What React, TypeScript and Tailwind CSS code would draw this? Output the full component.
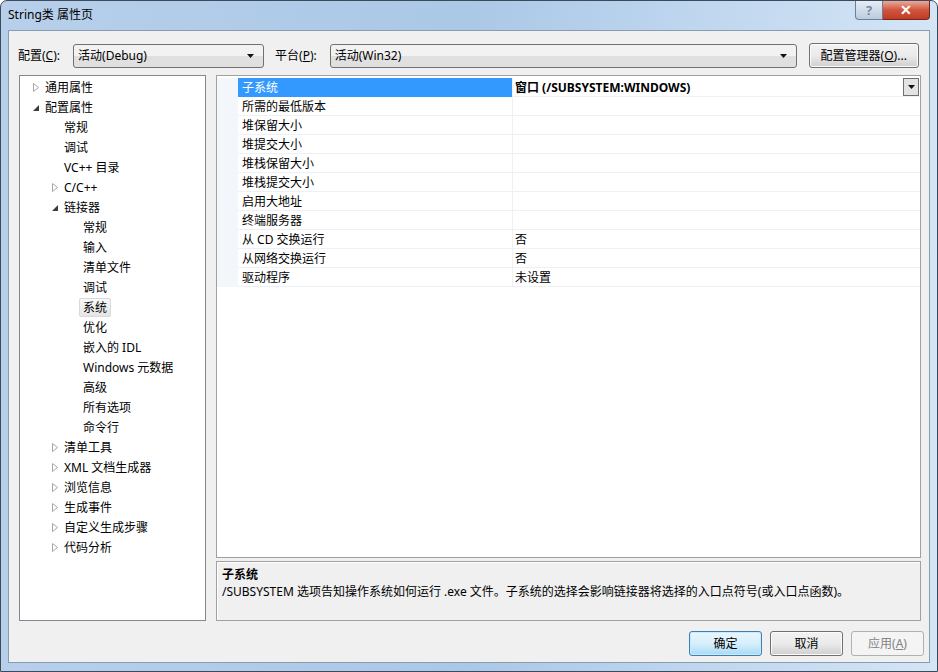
import React from "react";

type TreeItem = { label: string; level: number; exp?: "open" | "closed"; selected?: boolean };

const tree: TreeItem[] = [
  { label: "通用属性", level: 0, exp: "closed" },
  { label: "配置属性", level: 0, exp: "open" },
  { label: "常规", level: 1 },
  { label: "调试", level: 1 },
  { label: "VC++ 目录", level: 1 },
  { label: "C/C++", level: 1, exp: "closed" },
  { label: "链接器", level: 1, exp: "open" },
  { label: "常规", level: 2 },
  { label: "输入", level: 2 },
  { label: "清单文件", level: 2 },
  { label: "调试", level: 2 },
  { label: "系统", level: 2, selected: true },
  { label: "优化", level: 2 },
  { label: "嵌入的 IDL", level: 2 },
  { label: "Windows 元数据", level: 2 },
  { label: "高级", level: 2 },
  { label: "所有选项", level: 2 },
  { label: "命令行", level: 2 },
  { label: "清单工具", level: 1, exp: "closed" },
  { label: "XML 文档生成器", level: 1, exp: "closed" },
  { label: "浏览信息", level: 1, exp: "closed" },
  { label: "生成事件", level: 1, exp: "closed" },
  { label: "自定义生成步骤", level: 1, exp: "closed" },
  { label: "代码分析", level: 1, exp: "closed" },
];

const props: [string, string][] = [
  ["子系统", "窗口 (/SUBSYSTEM:WINDOWS)"],
  ["所需的最低版本", ""],
  ["堆保留大小", ""],
  ["堆提交大小", ""],
  ["堆栈保留大小", ""],
  ["堆栈提交大小", ""],
  ["启用大地址", ""],
  ["终端服务器", ""],
  ["从 CD 交换运行", "否"],
  ["从网络交换运行", "否"],
  ["驱动程序", "未设置"],
];

function Arrow() {
  return (
    <svg width="7" height="4" viewBox="0 0 7 4">
      <path d="M0 0h7L3.5 4z" fill="#111" />
    </svg>
  );
}

function Expander({ exp }: { exp?: "open" | "closed" }) {
  if (exp === "closed")
    return (
      <svg width="6" height="9" viewBox="0 0 6 9">
        <path d="M0.5 0.5L5.5 4.5L0.5 8.5z" fill="#fff" stroke="#a6a6a6" />
      </svg>
    );
  if (exp === "open")
    return (
      <svg width="6" height="6" viewBox="0 0 6 6">
        <path d="M6 0V6H0z" fill="#3c3c3c" />
      </svg>
    );
  return null;
}

function Combo({ text, w }: { text: string; w: string }) {
  return (
    <div
      className={`${w} h-[24px] flex items-center justify-between pl-[4px] pr-[9px] rounded-[3px] border border-[#707070] bg-gradient-to-b from-[#f2f2f2] from-50% to-[#e0e0e0] to-50%`}
    >
      <span>{text}</span>
      <Arrow />
    </div>
  );
}

function Btn({ children, kind }: { children: React.ReactNode; kind?: "default" | "disabled" }) {
  const base = "w-[73px] h-[25px] flex items-center justify-center rounded-[3px] border";
  if (kind === "default")
    return (
      <div className={`${base} border-[#3c7fb1] shadow-[inset_0_0_0_1px_#cdeafc] bg-gradient-to-b from-[#eaf6fd] via-[#d7effc] to-[#a7d9f5]`}>
        {children}
      </div>
    );
  if (kind === "disabled")
    return <div className={`${base} border-[#adb2b5] bg-[#f4f4f4] text-[#838383]`}>{children}</div>;
  return (
    <div className={`${base} border-[#707070] shadow-[inset_0_0_0_1px_#fcfcfc] bg-gradient-to-b from-[#f2f2f2] via-[#ebebeb] to-[#cfcfcf]`}>
      {children}
    </div>
  );
}

export default function App() {
  return (
    <div className="w-[938px] h-[672px] overflow-hidden text-[12px] leading-none text-black font-[family-name:'Noto_Sans','Noto_Sans_CJK_SC',sans-serif]">
      <div className="w-full h-full flex flex-col rounded-t-[7px] border border-[#3b4b5c] bg-gradient-to-r from-[#b7cfea] via-[#abc8e7] to-[#d4e5f6]">
        {/* title bar */}
        <div className="h-[29px] flex items-start justify-between pl-[7px] pr-[7px]">
          <span className="mt-[8px] text-[12px]">String类 属性页</span>
          <div className="flex">
            <div className="w-[28px] h-[19px] flex items-center justify-center rounded-bl-[4px] border border-t-0 border-[#6b7f95] bg-gradient-to-b from-[#e6eef7] to-[#b9cbe0] text-[#7a8a9b] font-bold text-[13px]">
              ?
            </div>
            <div className="w-[47px] h-[19px] flex items-center justify-center rounded-br-[4px] border border-t-0 border-l-0 border-[#6b2a1f] bg-gradient-to-b from-[#e9a99b] via-[#d0553d] to-[#c23a22] text-white font-bold text-[14px]">
              ✕
            </div>
          </div>
        </div>

        {/* client */}
        <div className="flex-1 mx-[7px] mb-[8px] flex flex-col border border-[#8a9cb0] bg-[#f0f0f0]">
          <div className="flex items-center mt-[12px] pl-[9px] h-[25px]">
            <span>
              配置(<span className="underline">C</span>):
            </span>
            <div className="ml-[13px]">
              <Combo text="活动(Debug)" w="w-[191px]" />
            </div>
            <span className="ml-[11px]">
              平台(<span className="underline">P</span>):
            </span>
            <div className="ml-[13px]">
              <Combo text="活动(Win32)" w="w-[467px]" />
            </div>
            <div className="ml-[12px] w-[110px] h-[25px] flex items-center justify-center rounded-[3px] border border-[#707070] shadow-[inset_0_0_0_1px_#fcfcfc] bg-gradient-to-b from-[#f2f2f2] via-[#ebebeb] to-[#cfcfcf]">
              配置管理器(<span className="underline">O</span>)...
            </div>
          </div>

          <div className="flex mt-[7px] pl-[10px] h-[546px]">
            {/* tree */}
            <div className="w-[187px] h-full border border-[#828790] bg-white pt-[1px]">
              {tree.map((t, i) => (
                <div key={i} className="h-[20px] flex items-center pt-[1px]" style={{ paddingLeft: 6 + t.level * 19 }}>
                  <div className="w-[19px] flex items-center justify-center">
                    <Expander exp={t.exp} />
                  </div>
                  {t.selected ? (
                    <span className="-ml-[4px] h-[19px] px-[3px] flex items-center rounded-[2px] border border-[#d9d9d9] bg-gradient-to-b from-[#f8f8f8] to-[#e5e5e5]">
                      {t.label}
                    </span>
                  ) : (
                    <span>{t.label}</span>
                  )}
                </div>
              ))}
            </div>

            <div className="ml-[10px] w-[705px] flex flex-col">
              {/* grid */}
              <div className="h-[484px] border border-[#a0a0a0] bg-white pt-[2px]">
                {props.map(([n, v], i) => (
                  <div key={i} className="h-[19px] flex">
                    <div className="w-[21px] bg-[#f3f6fb] border-b border-[#f3f6fb]" />
                    <div
                      className={`w-[274px] pl-[4px] pt-[1px] flex items-center border-b ${
                        i === 0 ? "bg-[#3399ff] text-white border-[#3399ff]" : "border-[#edf0f5]"
                      }`}
                    >
                      {n}
                    </div>
                    <div className="flex-1 pl-[2px] pr-[1px] flex items-center justify-between border-l border-b border-[#edf0f5]">
                      <span className={`pt-[1px] ${i === 0 ? "font-bold" : ""}`}>{v}</span>
                      {i === 0 && (
                        <div className="w-[16px] h-[18px] flex items-center justify-center border border-[#6f6f6f] bg-[#e3e3e3]">
                          <Arrow />
                        </div>
                      )}
                    </div>
                  </div>
                ))}
              </div>
              {/* description */}
              <div className="mt-[3px] h-[60px] border border-[#a0a0a0] shadow-[inset_1px_1px_0_#fff] px-[5px] pt-[7px]">
                <div className="font-bold">子系统</div>
                <div className="mt-[5px] whitespace-nowrap">
                  /SUBSYSTEM 选项告知操作系统如何运行 .exe 文件。子系统的选择会影响链接器将选择的入口点符号(或入口点函数)。
                </div>
              </div>
            </div>
          </div>

          <div className="flex justify-end gap-[8px] mt-[10px] pr-[5px]">
            <Btn kind="default">确定</Btn>
            <Btn>取消</Btn>
            <Btn kind="disabled">
              应用(<span className="underline">A</span>)
            </Btn>
          </div>
        </div>
      </div>
    </div>
  );
}
